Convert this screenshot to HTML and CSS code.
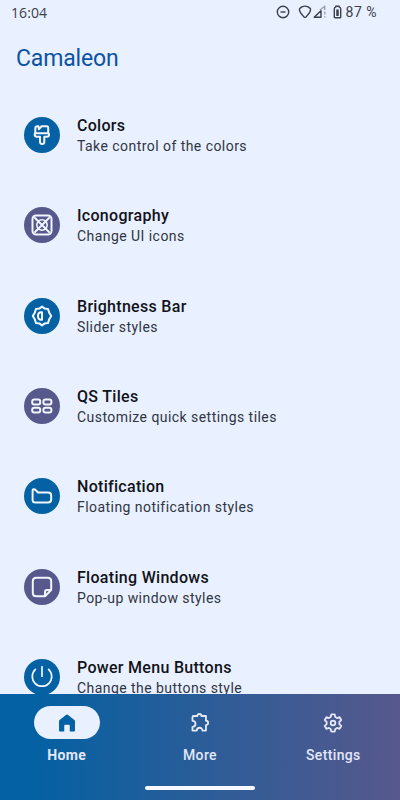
FILE: index.html
```html
<!DOCTYPE html>
<html lang="en">
<head>
<meta charset="utf-8">
<title>Camaleon</title>
<link rel="stylesheet" href="styles.css">
</head>
<body>
<div class="screen">
  <header class="status">
    <span class="clock">16:04</span>
    <span class="indicators">
      <svg class="dnd" width="14" height="14" viewBox="0 0 14 14"><circle cx="7" cy="7" r="5.7"/><path d="M4.5 7h5"/></svg>
      <svg class="wifi" width="14" height="14" viewBox="0 0 14 14"><path d="M4.3 1.7Q7 .6 9.7 1.7L11.8 3.1Q13 4.2 12.3 5.7L11.5 7.8 7.7 12.4H6.3L2.5 7.8 1.7 5.7Q1 4.2 2.2 3.1Z"/></svg>
      <svg class="signal" width="14" height="14" viewBox="0 0 14 14"><path class="dim" d="M7 5L11.7 1.2V5"/><path d="M1.2 12.3L8 5.7V12.3Z"/><path class="dim" d="M11.8 6.5v3M11.8 11.2v1.3"/></svg>
      <svg class="battery" width="9" height="14" viewBox="0 0 9 14"><path d="M1.3 12V3.7Q1.3 2.4 2.8 2.1V1.3H6.2V2.1Q7.7 2.4 7.7 3.7V12Q7.7 12.8 6.8 12.8H2.2Q1.3 12.8 1.3 12Z"/><path class="charge" d="M4.5 4.5v6.5"/></svg>
      <span class="percent">87 %</span>
    </span>
  </header>
  <h1>Camaleon</h1>
  <main class="list">
    <section class="row">
      <span class="badge"><svg viewBox="0 0 24 24"><path d="M5.3 10.2V5.2Q5.3 3.2 7.3 3.2H8.4L8.8 6.2 11.6 3.2H16.7Q18.2 3.2 18.2 4.7V10.2M5.3 10.2H18.2Q19 10.2 19 11V11.8Q19 13.7 17 13.7H14.3V19Q14.3 21 12.2 21T10 19V13.7H7Q4.7 13.7 4.7 11.8V11Q4.7 10.2 5.3 10.2Z"/></svg></span>
      <div class="copy"><h2>Colors</h2><p>Take control of the colors</p></div>
    </section>
    <section class="row">
      <span class="badge alt"><svg viewBox="0 0 24 24"><rect x="2.5" y="2.5" width="19" height="19" rx="3.5"/><path d="M5 5L19 19M19 5L5 19"/><circle class="thin" cx="12" cy="12" r="5.2"/></svg></span>
      <div class="copy"><h2>Iconography</h2><p>Change UI icons</p></div>
    </section>
    <section class="row">
      <span class="badge"><svg viewBox="0 0 24 24"><path d="M12 2.6L14.4 4.4 18 4.9 19.1 8.4 21.2 12 19.1 15.6 18 19.1 14.4 19.6 12 21.4 9.6 19.6 6 19.1 4.9 15.6 2.8 12 4.9 8.4 6 4.9 9.6 4.4ZM12 8.2V15.8H11Q8 15.8 8 12T11 8.2Z"/></svg></span>
      <div class="copy"><h2>Brightness Bar</h2><p>Slider styles</p></div>
    </section>
    <section class="row">
      <span class="badge alt"><svg viewBox="0 0 24 24"><rect x="2.2" y="5.6" width="8" height="4.8" rx="2"/><rect x="13.4" y="5.6" width="8" height="4.8" rx="2"/><rect x="2.2" y="13.7" width="8" height="4.8" rx="2"/><rect x="13.4" y="13.7" width="8" height="4.8" rx="2"/></svg></span>
      <div class="copy"><h2>QS Tiles</h2><p>Customize quick settings tiles</p></div>
    </section>
    <section class="row">
      <span class="badge"><svg viewBox="0 0 24 24"><path d="M2.6 16V6.4Q2.6 5.3 3.7 5.3 5 5.3 5.8 6.3L8 8.5H18Q21.2 8.5 21.2 11.7V15.2Q21.2 18.5 18 18.5H5.5Q2.6 18.5 2.6 16Z"/></svg></span>
      <div class="copy"><h2>Notification</h2><p>Floating notification styles</p></div>
    </section>
    <section class="row">
      <span class="badge alt"><svg viewBox="0 0 24 24"><path d="M15 21.2H6.3Q2.8 21.2 2.8 17.7V6.3Q2.8 2.8 6.3 2.8H17.7Q21.2 2.8 21.2 6.3V15L15 21.2V17Q15 15 17 15H21.2"/></svg></span>
      <div class="copy"><h2>Floating Windows</h2><p>Pop-up window styles</p></div>
    </section>
    <section class="row">
      <span class="badge"><svg viewBox="0 0 24 24"><path class="power" d="M12 1.7V11.2M5.4 4.4A9.7 9.7 0 1 0 18.6 4.4"/></svg></span>
      <div class="copy"><h2>Power Menu Buttons</h2><p>Change the buttons style</p></div>
    </section>
  </main>
  <footer class="dock">
    <nav>
      <a class="tab active"><span class="pill"><svg viewBox="0 0 24 24"><path d="M3.3 9.9Q3.3 9.2 3.9 8.7L11.2 3Q12 2.4 12.8 3L20.1 8.7Q20.7 9.2 20.7 9.9V20.5Q20.7 21.4 19.8 21.4H15V14.8Q15 14 14.2 14H9.8Q9 14 9 14.8V21.4H4.2Q3.3 21.4 3.3 20.5Z"/></svg></span><span>Home</span></a>
      <a class="tab"><span class="pill"><svg viewBox="0 0 24 24"><path d="M5 4.4H9.2A2.2 2.2 0 0 1 13.6 4.4H18.5V9.5A2.4 2.4 0 0 1 18.5 14.3V20.3H14.7A3.1 3.1 0 0 0 8.5 20.3H3.8V16.2A3.3 3.3 0 0 0 3.8 9.6V5.6Q3.8 4.4 5 4.4Z"/></svg></span><span>More</span></a>
      <a class="tab"><span class="pill"><svg viewBox="0 0 24 24"><path d="M10.2 2.6H13.8L14.5 5.5 16.4 6.6 19.2 5.7 21 8.8 18.9 10.8V13.2L21 15.2 19.2 18.3 16.4 17.4 14.5 18.5 13.8 21.4H10.2L9.5 18.5 7.6 17.4 4.8 18.3 3 15.2 5.1 13.2V10.8L3 8.8 4.8 5.7 7.6 6.6 9.5 5.5Z"/><circle cx="12" cy="12" r="2.5"/></svg></span><span>Settings</span></a>
    </nav>
    <div class="handle"></div>
  </footer>
</div>
</body>
</html>
```
FILE: styles.css
```css
* { box-sizing: border-box; }
body, h1, h2, p { margin: 0; }
body { font-family: Roboto, "Liberation Sans", sans-serif; background: #e9f0ff; }
.screen { width: 400px; height: 800px; display: flex; flex-direction: column; overflow: hidden; }
svg { fill: none; stroke: currentColor; stroke-width: 2; stroke-linejoin: round; stroke-linecap: round; }

.status { height: 24px; flex: none; display: flex; justify-content: space-between; align-items: center; padding: 0 23px 0 11px; color: #3c4048; font-size: 14px; }
.clock { font-family: "Open Sans", Roboto, sans-serif; letter-spacing: .1px; }
.indicators { display: flex; align-items: center; }
.indicators svg { stroke-width: 1.4; stroke-linecap: butt; }
.wifi { margin-left: 8px; }
.signal { margin-left: 1px; }
.battery { margin-left: 6px; }
.dim { opacity: .45; }
.indicators .charge { stroke-width: 2.5; }
.percent { margin-left: 4px; letter-spacing: .5px; }

h1 { height: 66px; flex: none; padding: 21px 16px 0; font-size: 23px; line-height: 28px; font-weight: 400; letter-spacing: -.15px; color: #0b54a4; }

.list { flex: 1; min-height: 0; overflow: hidden; }
.row { height: 90.33px; display: flex; align-items: center; padding-left: 24.4px; gap: 16.6px; }
.badge { width: 36px; height: 36px; flex: none; border-radius: 50%; display: flex; align-items: center; justify-content: center; background: #0461a3; color: #f2f6ff; }
.badge.alt { background: #57588c; }
.badge svg { width: 24px; height: 24px; }
.thin { stroke-width: 1.6; }
.power { stroke-width: 1.7; }
.copy { padding-top: 3px; white-space: nowrap; }
h2 { font-size: 16px; line-height: 20px; font-weight: 500; letter-spacing: .3px; color: #111318; }
p { font-size: 14px; line-height: 21px; letter-spacing: .45px; color: #303641; }

.dock { height: 106px; flex: none; padding-top: 12px; background: linear-gradient(90deg, #0461a3 0%, #0461a3 8%, #57588c 100%); }
nav { display: grid; grid-template-columns: repeat(3, 1fr); }
.tab { display: flex; flex-direction: column; align-items: center; gap: 6px; color: #e3e7f8; font-size: 14px; line-height: 20px; font-weight: 500; letter-spacing: .35px; }
.active { font-weight: 700; }
.pill { width: 66px; height: 33px; border-radius: 17px; display: flex; align-items: center; justify-content: center; }
.pill svg { width: 22px; height: 22px; }
.active .pill { background: #e9f0ff; color: #0461a3; }
.active svg { fill: currentColor; stroke: none; }
.handle { width: 110px; height: 4px; border-radius: 2px; margin: 21px auto 0; background: #f8f8ff; }
```
